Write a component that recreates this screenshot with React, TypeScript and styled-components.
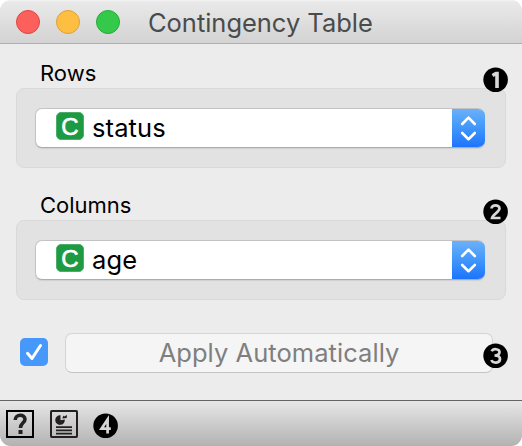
import React from "react";
import styled, { createGlobalStyle } from "styled-components";

const GlobalStyle = createGlobalStyle`
  * { box-sizing: border-box; }
  body { margin: 0; background: #fff; font-family: Inter, "Liberation Sans", sans-serif; }
`;

const Window = styled.div`
  width: 522px;
  height: 446px;
  display: flex;
  flex-direction: column;
  overflow: hidden;
  border-radius: 11px;
  background: #ececec;
`;

const TitleBar = styled.header`
  position: relative;
  flex: 0 0 44px;
  display: flex;
  align-items: center;
  gap: 16px;
  padding: 0 16px;
  background: linear-gradient(#f4f4f4 0, #e9e9e9 2px, #d3d3d3 43px);
  border-bottom: 1px solid #b0b0b0;
`;

const Light = styled.span<{ $fill: string; $edge: string }>`
  width: 24px;
  height: 24px;
  border-radius: 50%;
  background: ${(p) => p.$fill};
  border: 1px solid ${(p) => p.$edge};
`;

const Title = styled.h1`
  margin: 3px 0 0 12px;
  font-size: 25.5px;
  font-weight: 400;
  line-height: 40px;
  letter-spacing: -0.03px;
  white-space: nowrap;
  color: #4b4b4b;
`;

const Content = styled.main`
  flex: 1;
  padding: 14px 16px 0;
`;

const Field = styled.section`
  position: relative;
  height: 132px;
`;

const Label = styled.div`
  height: 30px;
  padding-left: 24px;
  font-size: 22px;
  line-height: 30px;
  font-weight: 400;
  letter-spacing: 0;
  color: #000;
`;

const GroupBox = styled.div`
  width: 490px;
  height: 80px;
  border: 1px solid #d9d9d9;
  border-radius: 8px;
  background: #e2e2e2;
  padding: 19px 20px 0 18px;
`;

const Select = styled.div`
  display: flex;
  width: 450px;
  height: 40px;
  border-radius: 7px;
  overflow: hidden;
  border: 1px solid #c3c3c3;
  border-right: 0;
  border-bottom-color: #acacac;
  background: #fff;
  box-shadow: 0 1px 1px #d0d0d0;
`;

const Value = styled.div`
  flex: 1;
  display: flex;
  padding-left: 20px;
  font-size: 25.5px;
  font-weight: 400;
  letter-spacing: 0.1px;
  line-height: 38px;
  color: #000;
`;

const TypeIcon = styled.span`
  width: 28px;
  height: 28px;
  margin: 3px 8px 0 0;
  border: 1px solid #4cae68;
  border-radius: 5px;
  background: #1d9a42;
  color: #fff;
  font: 24px/27px "Liberation Sans", sans-serif;
  -webkit-text-stroke: 0.6px #fff;
  text-align: center;
`;

const Stepper = styled.div`
  width: 33px;
  height: 40px;
  margin-top: -1px;
  background: linear-gradient(#6cb2f9, #469bfa 45%, #1c74fc);
  border-bottom: 1px solid #1261e5;
`;

const ApplyRow = styled.div`
  position: relative;
  display: flex;
  align-items: center;
  gap: 17px;
  height: 40px;
  margin: 11px 0 0 4px;
`;

const Checkbox = styled.div`
  width: 28px;
  height: 28px;
  margin-top: -2px;
  border-radius: 5px;
  background: #4698fa;
`;

const ApplyButton = styled.button`
  width: 428px;
  height: 40px;
  padding: 0;
  border: 1px solid #d4d4d4;
  border-bottom-color: #c4c4c4;
  border-radius: 7px;
  background: #f5f5f5;
  color: #7f7f7f;
  font: 400 25.5px/36px Inter, "Liberation Sans", sans-serif;
  letter-spacing: 0.05px;
  white-space: nowrap;
`;

const StatusBar = styled.footer`
  display: flex;
  flex: 0 0 46px;
  gap: 16px;
  padding: 9px 6px 0;
  border-top: 1px solid #636363;
  background: linear-gradient(#e7e7e7, #b2b2b2);
`;

const CornerBadge = styled.div<{ $top: number; $right: number }>`
  position: absolute;
  top: ${(p) => p.$top}px;
  right: ${(p) => p.$right}px;
  height: 26px;
`;

const StatusBadge = styled.div`
  margin: 3px 0 0 -1px;
`;

const Drawing = styled.svg`
  display: block;
`;

const numerals: Record<number, string> = {
  1: "M9.5 8.5L13 6.5h1v14.5",
  2: "M8.5 9.5C8.5 5.2 16.5 5.2 16.5 9.5C16.5 12.5 9.5 16 9 19H17.5",
  3: "M8.7 8.3C10 5.3 16.5 5.5 16.5 9.1C16.5 11.8 14.5 12.5 11.5 12.5C15 12.5 17 13.5 17 16C17 20.7 9.5 20.5 8.5 17",
  4: "M14.6 20.5V6.5L8.5 15.7H17.8",
};

function NumberBadge({ n }: { n: number }) {
  return (
    <Drawing width="26" height="26" viewBox="0 0 26 26" aria-label={String(n)}>
      <circle cx="12.6" cy="12.7" r="12.3" />
      <path d={numerals[n]} fill="none" stroke="#d8d8d8" strokeWidth={n === 1 ? 3.6 : 2.7} />
    </Drawing>
  );
}

function SelectBox({ value }: { value: string }) {
  return (
    <Select>
      <Value>
        <TypeIcon>C</TypeIcon>
        {value}
      </Value>
      <Stepper>
        <Drawing width="33" height="40" fill="none" stroke="#fff" strokeWidth="2.6" strokeLinecap="round" strokeLinejoin="round">
          <path d="M10.2 16L16.5 9.7L22.8 16M10.2 25L16.5 31.2L22.8 25" />
        </Drawing>
      </Stepper>
    </Select>
  );
}

export default function App() {
  return (
    <>
      <GlobalStyle />
      <Window>
        <TitleBar>
          <Light $fill="#fc605c" $edge="#e0443f" />
          <Light $fill="#fdbe41" $edge="#dea136" />
          <Light $fill="#35c94b" $edge="#27aa35" />
          <Title>Contingency Table</Title>
        </TitleBar>
        <Content>
          <Field>
            <Label>Rows</Label>
            <GroupBox><SelectBox value="status" /></GroupBox>
            <CornerBadge $top={9} $right={-3}><NumberBadge n={1} /></CornerBadge>
          </Field>
          <Field>
            <Label>Columns</Label>
            <GroupBox><SelectBox value="age" /></GroupBox>
            <CornerBadge $top={9} $right={-3}><NumberBadge n={2} /></CornerBadge>
          </Field>
          <ApplyRow>
            <Checkbox>
              <Drawing width="28" height="28" fill="none" stroke="#fff" strokeWidth="3" strokeLinecap="round" strokeLinejoin="round">
                <path d="M7.5 15.3L12 20.5L20.5 7.5" />
              </Drawing>
            </Checkbox>
            <ApplyButton disabled>Apply Automatically</ApplyButton>
            <CornerBadge $top={10} $right={-3}><NumberBadge n={3} /></CornerBadge>
          </ApplyRow>
        </Content>
        <StatusBar>
          <Drawing width="28" height="28" fill="none" stroke="#000" strokeWidth="2">
            <rect x="1" y="1" width="26" height="26" />
            <path d="M9.2 10C9.2 3.8 19 4 19 9.2C19 13 14.5 12.7 14.5 18" stroke="#222" strokeWidth="3.6" />
            <path d="M12.5 20h4v4h-4z" fill="#222" stroke="none" />
          </Drawing>
          <Drawing width="28" height="28" fill="none" stroke="#231f20" strokeWidth="2">
            <rect x="1" y="1" width="26" height="26" rx=".7" />
            <path d="M6 17.2h16M6 20.4h16M6 23.6h16" strokeWidth="1.8" />
            <path d="M10.5 5.3A4.8 4.8 0 1 0 14.8 9.5L10.5 10.2z" fill="#231f20" stroke="none" />
            <path d="M12.3 8.4L13.4 5.4L14.2 6.6L16.8 5V8z" fill="#231f20" stroke="none" />
          </Drawing>
          <StatusBadge><NumberBadge n={4} /></StatusBadge>
        </StatusBar>
      </Window>
    </>
  );
}
